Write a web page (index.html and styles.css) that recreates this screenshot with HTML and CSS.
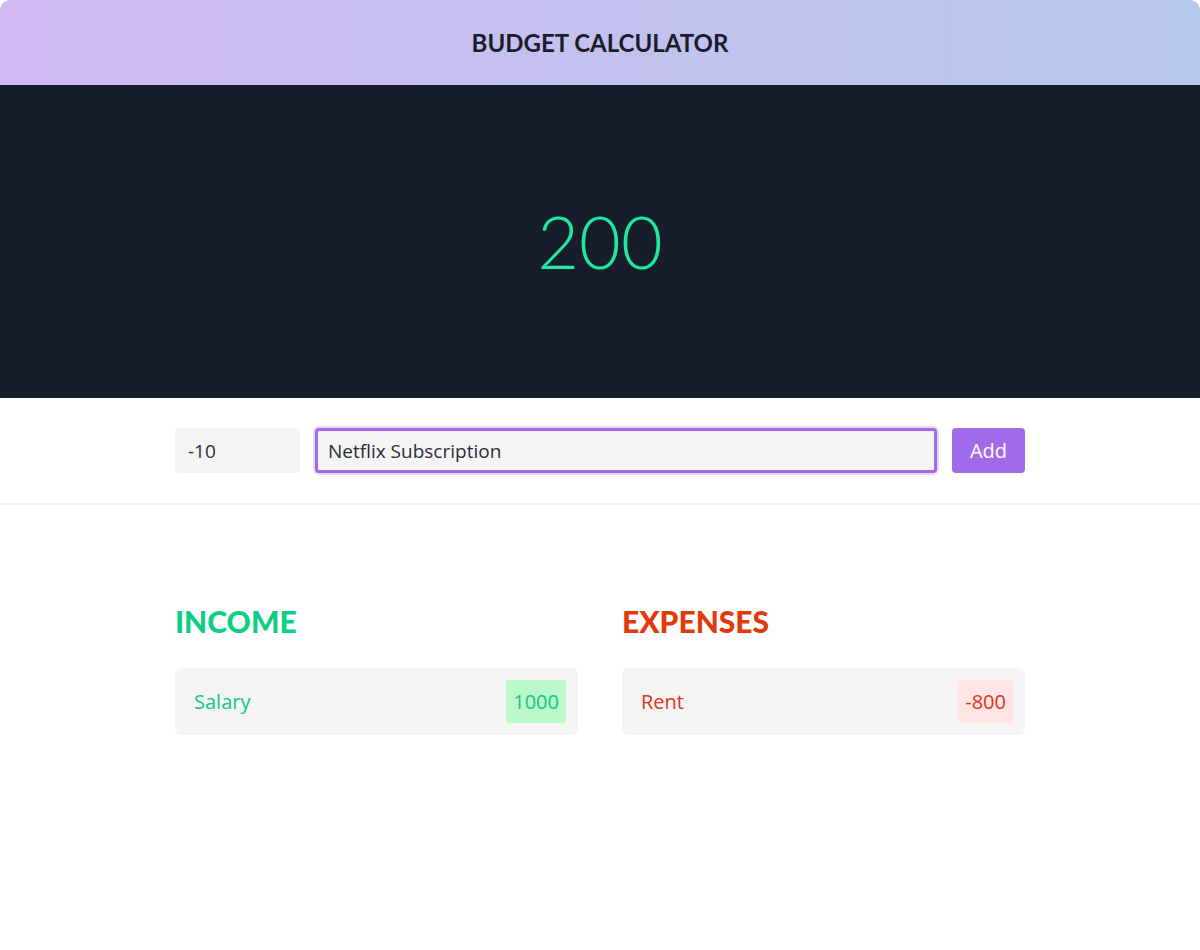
FILE: index.html
```html
<!DOCTYPE html>
<html lang="en">
  <head>
    <meta charset="UTF-8" />
    <meta name="viewport" content="width=device-width, initial-scale=1.0" />
    <title>Budget Calculator</title>
    <link rel="stylesheet" href="styles.css">
  </head>
  <body>
    <header class="header">
      <h1>Budget Calculator</h1>
    </header>
    <section class="balance">
      <div class="total">200</div>
    </section>
    <section class="form-bar">
      <form class="form">
        <input type="text" class="amount" value="-10" />
        <input type="text" class="desc focused" value="Netflix Subscription" />
        <button type="button" class="add">Add</button>
      </form>
    </section>
    <main class="lists">
      <div class="column">
        <h2 class="income-title">Income</h2>
        <div class="item income">
          <span>Salary</span>
          <span class="value">1000</span>
        </div>
      </div>
      <div class="column">
        <h2 class="expense-title">Expenses</h2>
        <div class="item expense">
          <span>Rent</span>
          <span class="value">-800</span>
        </div>
      </div>
    </main>
  </body>
</html>
```

FILE: styles.css
```css
body {
  margin: 0;
  font-family: "Open Sans", "Noto Sans", sans-serif;
  background: #fff;
  color: #1a1d2b;
}
.header {
  height: 85px;
  display: flex;
  align-items: center;
  justify-content: center;
  background: linear-gradient(90deg, #d1b9f3, #b5c8ea);
  border-radius: 10px 10px 0 0;
}
.header h1 {
  margin: 0;
  font-family: Lato, sans-serif;
  font-weight: 700;
  font-size: 24px;
  text-transform: uppercase;
  color: #1a1d2b;
}
.balance {
  height: 313px;
  background: #181d2b;
  display: flex;
  align-items: center;
  justify-content: center;
}
.total {
  font-family: Lato, sans-serif;
  font-weight: 300;
  font-size: 72px;
  color: #1ee9a1;
  margin-top: -2px;
}
.form-bar {
  border-bottom: 2px solid #f0f0f0;
  padding: 30px 0 30px;
}
.form {
  width: 850px;
  margin: 0 auto;
  display: flex;
  gap: 15px;
}
input,
button {
  font-family: inherit;
  font-size: 19px;
  height: 45px;
  box-sizing: border-box;
  border-radius: 4px;
  border: 3px solid transparent;
  background: #f4f4f4;
  color: #2a2d38;
  padding: 0 10px;
  outline: none;
}
.amount {
  width: 125px;
}
.desc {
  flex: 1;
}
.focused {
  border-color: #a06ae8;
  box-shadow: 0 0 0 2px #e6d9fa;
}
.add {
  width: 73px;
  background: #a06ae8;
  color: #fff;
  border: none;
  font-size: 20px;
  padding: 0;
}
.lists {
  width: 850px;
  margin: 0 auto;
  padding-top: 98px;
  display: grid;
  grid-template-columns: 1fr 1fr;
  gap: 44px;
}
.column h2 {
  margin: 0 0 29px;
  font-family: Lato, sans-serif;
  font-weight: 900;
  font-size: 30px;
  text-transform: uppercase;
}
.income-title {
  color: #0ccf84;
}
.expense-title {
  color: #e03a0a;
}
.item {
  background: #f4f4f4;
  border-radius: 6px;
  height: 67px;
  box-sizing: border-box;
  padding: 0 12px 0 19px;
  display: flex;
  align-items: center;
  justify-content: space-between;
  font-size: 20px;
  line-height: 1;
}
.item .value {
  padding: 0 7px;
  height: 43px;
  line-height: 43px;
  border-radius: 3px;
}
.income {
  color: #12c77f;
}
.income .value {
  background: #baf7cb;
}
.expense {
  color: #d8391a;
}
.expense .value {
  background: #fee4e4;
}
```
